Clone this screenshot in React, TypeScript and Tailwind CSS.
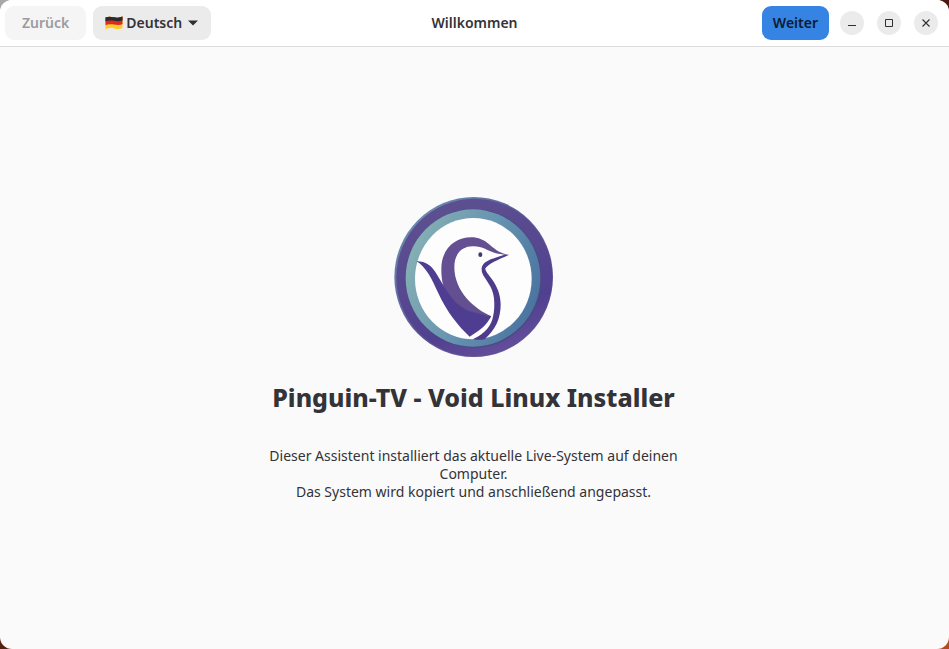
import React, { useState } from "react";

/* LANGUAGES */
const LANGUAGES = [
  { code: "de", label: "Deutsch" },
  { code: "en", label: "English" },
];

/* INTRO TEXT */
const INTRO = [
  "Dieser Assistent installiert das aktuelle Live-System auf deinen Computer.",
  "Das System wird kopiert und anschließend angepasst.",
];

/* WINDOW CONTROLS */
const CONTROLS = [
  { label: "Minimieren", path: "M4 10.5h8", width: 1 },
  { label: "Maximieren", path: "M4.5 4.5h7v7h-7z", width: 1 },
  { label: "Schließen", path: "M4.5 4.5l7 7M11.5 4.5l-7 7", width: 1.1 },
];

const GermanFlag: React.FC = () => (
  <svg viewBox="0 0 18 14" className="w-[18px] h-[14px] shrink-0" aria-hidden="true">
    <defs>
      <clipPath id="flag-wave">
        <path d="M0.5 1.6C3 0.2 6 0.5 9 1.3S15 1.8 17.5 0.6V12C15 13.4 12 13.2 9 12.4S3 12 0.5 13.2Z" />
      </clipPath>
    </defs>
    <g clipPath="url(#flag-wave)">
      <path d="M0 0h18v14H0z" fill="#fbcd2d" />
      <path d="M0 0h18v8C15 9.4 12 9.2 9 8.6S3 8 0 9.2Z" fill="#e02a20" />
      <path d="M0 0h18v4.2C15 5.6 12 5.4 9 4.8S3 4.2 0 5.4Z" fill="#2b2b2d" />
    </g>
  </svg>
);

const Logo: React.FC = () => (
  <svg viewBox="30 30 480 480" className="size-40" role="img" aria-label="Pinguin-TV">
    <defs>
      <linearGradient id="ring" x1="0.3" y1="0" x2="0.7" y2="1">
        <stop offset="0" stopColor="#5d5090" />
        <stop offset="0.45" stopColor="#57488f" />
        <stop offset="0.75" stopColor="#51408f" />
        <stop offset="1" stopColor="#65509a" />
      </linearGradient>
      <linearGradient id="rim" x1="0" y1="0" x2="1" y2="1">
        <stop offset="0" stopColor="#6f9dbb" />
        <stop offset="0.5" stopColor="#5c5596" />
        <stop offset="1" stopColor="#6a55a0" />
      </linearGradient>
      <linearGradient id="teal" x1="0" y1="0.3" x2="1" y2="0.7">
        <stop offset="0" stopColor="#86b1b4" />
        <stop offset="0.5" stopColor="#6794b0" />
        <stop offset="1" stopColor="#49729f" />
      </linearGradient>
      <linearGradient id="head" x1="0" y1="0" x2="1" y2="1">
        <stop offset="0" stopColor="#644f93" />
        <stop offset="1" stopColor="#62508d" />
      </linearGradient>
    </defs>
    <ellipse cx="269" cy="270" rx="238" ry="240" fill="url(#rim)" />
    <ellipse cx="271" cy="271" rx="234" ry="236" fill="url(#ring)" />
    <ellipse cx="269" cy="274" rx="204" ry="208" fill="#4a4a86" />
    <ellipse cx="267" cy="273" rx="202" ry="206" fill="url(#teal)" />
    <ellipse cx="268" cy="275" rx="175" ry="182" fill="#fcfdfc" />
    {/* head and back */}
    <path
      d="M375 203C350 200 337 190 318 174C301 159 282 151 262 151C212 151 172 187 172 245C172 275 176 298 187 318C220 372 285 384 322 388C272 366 211 314 211 240C211 200 234 178 266 178C295 177 311 192 333 198C347 201 356 202 362 203L375 203Z"
      fill="url(#head)"
    />
    {/* throat and chest */}
    <path
      d="M375 203C342 219 316 227 304 244C302 260 350 289 350 352C350 396 334 428 302 457Q284 460 266 457C305 438 322 415 327 389C331 373 332 355 330 334C326 290 293 271 293 248C293 222 322 216 362 203Z"
      fill="#4e3b8c"
    />
    {/* wing */}
    <path
      d="M97 222C128 224 143 235 160 265C184 305 198 333 226 355C256 378 294 381 322 388C308 414 288 431 257 449C224 419 188 374 163 319C143 274 126 240 97 222Z"
      fill="#4f3d91"
    />
    <ellipse cx="289" cy="203" rx="6" ry="7" fill="#43396f" />
  </svg>
);

const App: React.FC = () => {
  const [language, setLanguage] = useState("de");

  return (
    <div className="min-h-screen flex bg-[conic-gradient(from_0deg,#4a1a0c_0deg_90deg,#b64a1c_90deg_180deg,#54200f_180deg_270deg,#a8a8a8_270deg_360deg)] font-['Noto_Sans',sans-serif] text-[#333338]">
      <div className="flex-1 flex flex-col rounded-xl overflow-hidden bg-[#fafafa]">
        {/* HEADER BAR */}
        <header className="grid grid-cols-[1fr_auto_1fr] items-center bg-white border-b border-[#dcdcdc] px-[5px] py-1.5 text-sm font-semibold">
          <div className="flex items-center gap-[7px]">
            <button
              type="button"
              disabled
              className="h-[34px] px-[17px] rounded-[9px] bg-[#f5f5f5] text-[#9b9b9d]"
            >
              Zurück
            </button>
            <div className="h-[34px] px-3 rounded-[9px] bg-[#ebebeb] flex items-center">
              <GermanFlag />
              <select
                aria-label="Sprache"
                value={language}
                onChange={(e) => setLanguage(e.target.value)}
                className="appearance-none field-sizing-content leading-6 bg-transparent font-semibold ml-[3px] outline-none"
              >
                {LANGUAGES.map(({ code, label }) => (
                  <option key={code} value={code}>
                    {label}
                  </option>
                ))}
              </select>
              <svg viewBox="0 0 12 6" className="w-3 h-1.5 ml-[5px]" aria-hidden="true">
                <path d="M1 0.5h10L6 5.5z" fill="#2e2e33" />
              </svg>
            </div>
          </div>

          <h1>Willkommen</h1>

          <div className="flex items-center justify-end gap-[13px] pr-1.5">
            <button
              type="button"
              className="h-[34px] px-[11px] -mr-0.5 rounded-[9px] bg-[#3584e4] text-[#0b1b30]"
            >
              Weiter
            </button>
            {CONTROLS.map(({ label, path, width }) => (
              <button
                key={label}
                type="button"
                aria-label={label}
                className="size-6 rounded-full bg-[#ebebeb] flex items-center justify-center"
              >
                <svg viewBox="0 0 16 16" className="size-4" fill="none" stroke="#2e2e33" strokeWidth={width}>
                  <path d={path} />
                </svg>
              </button>
            ))}
          </div>
        </header>

        {/* WELCOME PAGE */}
        <main className="flex-1 flex flex-col items-center justify-center pt-0.5 pl-6 pr-[26px] text-center">
          <Logo />
          <h2 className="mt-6 text-[25px] leading-8 font-extrabold">Pinguin-TV - Void Linux Installer</h2>
          <div className="mt-[34px] max-w-[420px] text-sm leading-[18px]">
            {INTRO.map((line) => (
              <p key={line}>{line}</p>
            ))}
          </div>
        </main>
      </div>
    </div>
  );
};

export default App;
